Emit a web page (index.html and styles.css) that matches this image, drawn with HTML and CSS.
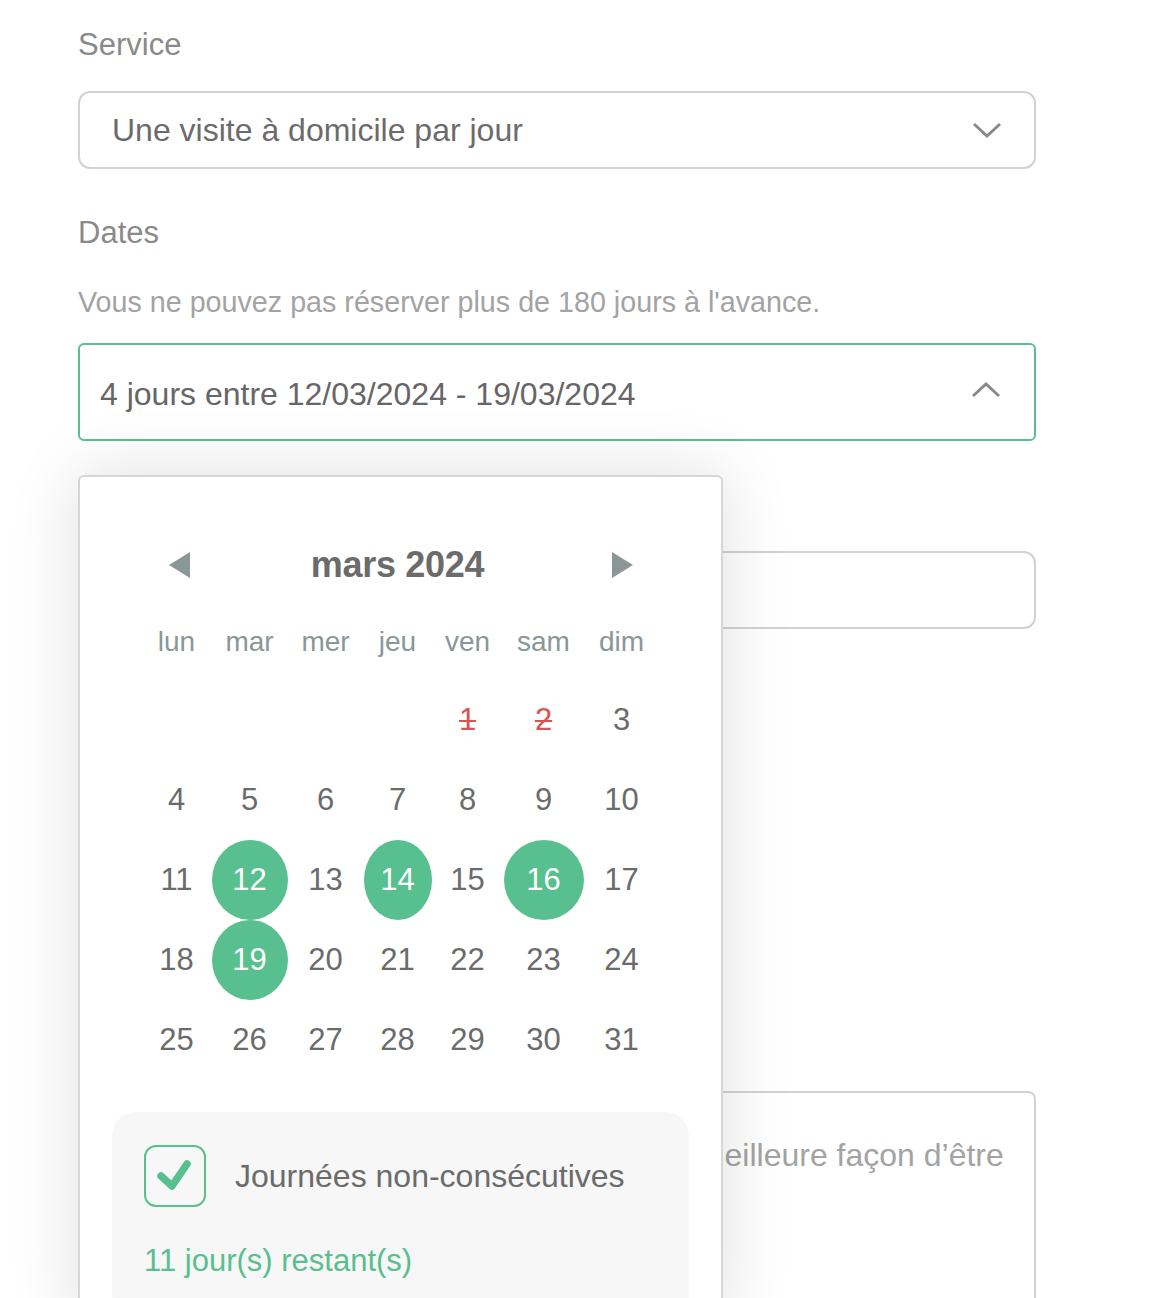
FILE: index.html
```html
<!doctype html>
<html lang="fr">
<head>
  <meta charset="utf-8">
  <title>Réservation</title>
  <link rel="stylesheet" href="styles.css">
</head>
<body>
  <form class="booking">

    <label class="field-label">Service</label>
    <div class="select">
      <span>Une visite à domicile par jour</span>
      <svg class="chevron" width="30" height="18" viewBox="0 0 30 18"><path d="M2 3 L15 15 L28 3" /></svg>
    </div>

    <label class="field-label dates-label">Dates</label>
    <p class="helper">Vous ne pouvez pas réserver plus de 180 jours à l'avance.</p>

    <div class="date-wrap">
      <div class="date-field">
        <span>4 jours entre 12/03/2024 - 19/03/2024</span>
        <svg class="chevron" width="30" height="18" viewBox="0 0 30 18"><path d="M2 15 L15 3 L28 15" /></svg>
      </div>

      <!-- calendar popup -->
      <div class="picker">
        <div class="month-nav">
          <span class="nav-btn"><span class="arrow arrow-left"></span></span>
          <span class="month-title">mars 2024</span>
          <span class="nav-btn"><span class="arrow arrow-right"></span></span>
        </div>
        <div class="days">
          <span class="wd">lun</span><span class="wd">mar</span><span class="wd">mer</span><span class="wd">jeu</span><span class="wd">ven</span><span class="wd">sam</span><span class="wd">dim</span>

          <span></span><span></span><span></span><span></span>
          <span class="day past">1</span><span class="day past">2</span><span class="day">3</span>

          <span class="day">4</span><span class="day">5</span><span class="day">6</span><span class="day">7</span><span class="day">8</span><span class="day">9</span><span class="day">10</span>

          <span class="day">11</span><span class="day selected">12</span><span class="day">13</span><span class="day selected">14</span><span class="day">15</span><span class="day selected">16</span><span class="day">17</span>

          <span class="day">18</span><span class="day selected">19</span><span class="day">20</span><span class="day">21</span><span class="day">22</span><span class="day">23</span><span class="day">24</span>

          <span class="day">25</span><span class="day">26</span><span class="day">27</span><span class="day">28</span><span class="day">29</span><span class="day">30</span><span class="day">31</span>
        </div>

        <div class="options">
          <div class="check-row">
            <span class="checkbox">
              <svg width="58" height="58" viewBox="0 0 58 58"><path d="M15 29 L26 39 L41 17" /></svg>
            </span>
            <span class="check-label">Journées non-consécutives</span>
          </div>
          <p class="remaining">11 jour(s) restant(s)</p>
        </div>
      </div>
    </div>

    <label class="field-label under">Adresse</label>
    <div class="input"></div>

    <label class="field-label under-2">Instructions</label>
    <div class="textarea">Décrivez ses habitudes, ses besoins et la meilleure façon d’être</div>

  </form>
</body>
</html>
```

FILE: styles.css
```css
body {
  margin: 0;
  background: #fff;
  font-family: "Liberation Sans", Arial, sans-serif;
  color: #6b6b6b;
}

.booking {
  width: 958px;
  margin-left: 78px;
  padding-top: 27px;
  padding-bottom: 100px;
}

.field-label {
  display: block;
  font-size: 31px;
  line-height: 36px;
  color: #8a8a8a;
}

.select {
  box-sizing: border-box;
  height: 78px;
  margin-top: 28px;
  border: 2px solid #d2d2d2;
  border-radius: 12px;
  display: flex;
  align-items: center;
  justify-content: space-between;
  padding: 0 32px 0 32px;
  font-size: 32px;
  color: #6b6b6b;
}

.chevron path {
  fill: none;
  stroke: #8a8a8a;
  stroke-width: 3;
}

.dates-label {
  margin-top: 46px;
}

.helper {
  margin: 34px 0 0;
  font-size: 28.7px;
  line-height: 34px;
  color: #a3a3a3;
}

.date-wrap {
  position: relative;
  margin-top: 24px;
}

.date-field {
  box-sizing: border-box;
  height: 98px;
  border: 2px solid #5bbf8e;
  border-radius: 6px;
  display: flex;
  align-items: center;
  justify-content: space-between;
  padding: 5px 33px 0 20px;
  font-size: 32px;
  color: #666;
}

.date-field .chevron {
  margin-top: -10px;
}

/* calendar */
.picker {
  position: absolute;
  top: 132px;
  left: 0;
  width: 645px;
  box-sizing: border-box;
  padding: 58px 32px 0;
  background: #fff;
  border: 2px solid #d6d6d6;
  border-radius: 6px;
  box-shadow: 0 0 70px rgba(0, 0, 0, 0.13);
  z-index: 2;
}

.month-nav {
  width: 518px;
  height: 60px;
  margin: 0 auto;
  display: flex;
  align-items: center;
  justify-content: space-between;
}

.nav-btn {
  width: 70px;
  display: flex;
  justify-content: center;
}

.nav-btn:last-child {
  width: 76px;
}

.arrow {
  width: 0;
  height: 0;
  border-top: 13px solid transparent;
  border-bottom: 13px solid transparent;
}

.arrow-left {
  border-right: 21px solid #8a9797;
  margin-left: 6px;
}

.arrow-right {
  border-left: 21px solid #8a9797;
  margin-left: 2px;
}

.month-title {
  font-size: 36px;
  font-weight: bold;
  color: #6b6b6b;
  letter-spacing: -0.3px;
}

.days {
  width: 518px;
  margin: 0 auto;
  display: grid;
  grid-template-columns: 70px 76px 76px 68px 72px 80px 76px;
  grid-template-rows: 85px repeat(5, 80px);
}

.days span {
  display: flex;
  align-items: center;
  justify-content: center;
}

.days .wd {
  font-size: 28px;
  color: #8a9797;
  padding-top: 8px;
}

.day {
  font-size: 31px;
  color: #6b6b6b;
  border-radius: 50%;
}

.day.past {
  color: #d9534f;
  text-decoration: line-through;
  text-decoration-thickness: 2px;
}

.day.selected {
  background: #58bf8e;
  color: #fff;
}

.options {
  margin-top: 32px;
  background: #f7f7f7;
  border-radius: 24px;
  padding: 33px 32px 40px;
}

.check-row {
  display: flex;
  align-items: center;
  gap: 29px;
}

.checkbox {
  width: 62px;
  height: 62px;
  box-sizing: border-box;
  border: 2px solid #5bbf8e;
  border-radius: 12px;
  display: flex;
  align-items: center;
  justify-content: center;
}

.checkbox path {
  fill: none;
  stroke: #58bf8e;
  stroke-width: 7.5;
  stroke-linecap: round;
  stroke-linejoin: round;
}

.check-label {
  font-size: 32px;
  color: #6b6b6b;
}

.remaining {
  margin: 36px 0 0;
  font-size: 31px;
  line-height: 36px;
  color: #58bf8e;
}

/* fields under the popup */
.under {
  margin-top: 74px;
}

.under-2 {
  margin-top: 426px;
}

.input {
  box-sizing: border-box;
  height: 78px;
  border: 2px solid #d2d2d2;
  border-radius: 12px;
}

.textarea {
  box-sizing: border-box;
  height: 400px;
  border: 2px solid #d2d2d2;
  border-radius: 8px;
  padding: 42px 0 0 22px;
  font-size: 32px;
  line-height: 40px;
  color: #a3a3a3;
  white-space: nowrap;
  overflow: hidden;
}
```
